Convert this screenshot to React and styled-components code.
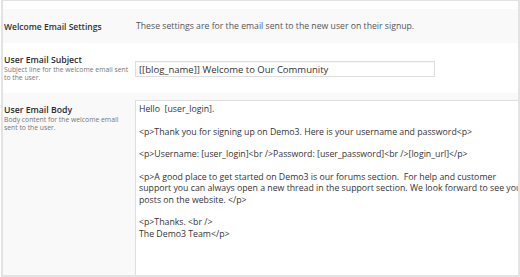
import * as React from "react";
import styled, { createGlobalStyle } from "styled-components";

const GlobalStyle = createGlobalStyle`
  html, body {
    margin: 0;
    padding: 0;
    background: #fff;
  }
  body {
    font-family: "Open Sans", "Noto Sans", "Liberation Sans", sans-serif;
    color: #333;
  }
`;

const Frame = styled.div`
  box-sizing: border-box;
  width: 519px;
  height: 277px;
  margin-left: 1px;
  padding-top: 8px;
  border-top: 1px solid #e3e3e3;
  border-left: 2px solid #e3e3e3;
  border-right: 2px solid #e3e3e3;
  border-bottom: 2px solid #e3e3e3;
  display: flex;
  flex-direction: column;
  overflow: hidden;
`;

const Row = styled.div`
  display: grid;
  grid-template-columns: 132px 1fr;
  background: ${({ $shaded }) => ($shaded ? "#f9f9f9" : "#fff")};
  height: ${({ $height }) => ($height ? `${$height}px` : "auto")};
  flex: ${({ $grow }) => ($grow ? 1 : "none")};
  min-height: 0;
`;

const LabelCell = styled.div`
  padding: ${({ $top }) => `${$top}px`} 2px 0 1px;
  display: flex;
  flex-direction: column;
  justify-content: ${({ $center }) => ($center ? "center" : "flex-start")};
`;

const SectionTitle = styled.div`
  font-size: 8.5px;
  font-weight: 600;
  color: #333;
  white-space: nowrap;
`;

const FieldLabel = styled.div`
  font-size: 8.7px;
  line-height: 12px;
  font-weight: 600;
  color: #2a2a2a;
`;

const FieldHint = styled.div`
  font-size: 6.8px;
  line-height: 8px;
  color: #777;
  white-space: pre-line;
`;

const ValueCell = styled.div`
  display: flex;
  flex-direction: column;
  justify-content: ${({ $center }) => ($center ? "center" : "flex-start")};
  padding-top: ${({ $top }) => `${$top || 0}px`};
  min-height: 0;
`;

const SectionText = styled.div`
  padding-left: 1px;
  font-size: 8.7px;
  color: #555;
  white-space: nowrap;
`;

const TextInput = styled.input`
  box-sizing: border-box;
  width: 300px;
  height: 16px;
  margin: 0;
  padding: 0 3px;
  border: 1px solid #dedede;
  box-shadow: inset 0 1px 1px rgba(0, 0, 0, 0.04);
  background: #fff;
  font-family: inherit;
  font-size: 9.5px;
  color: #333;
  outline: none;
`;

const BodyArea = styled.textarea`
  box-sizing: border-box;
  flex: 1;
  width: 100%;
  margin: 0;
  padding: 3px 3px 0;
  border: 1px solid #dedede;
  border-right: none;
  border-bottom: none;
  background: #fff;
  font-family: inherit;
  font-size: 8.75px;
  line-height: 11.35px;
  color: #333;
  white-space: pre;
  overflow: hidden;
  resize: none;
  outline: none;
`;

const bodyText = `Hello  [user_login].

<p>Thank you for signing up on Demo3. Here is your username and password<p>

<p>Username: [user_login]<br />Password: [user_password]<br />[login_url]</p>

<p>A good place to get started on Demo3 is our forums section.  For help and customer
support you can always open a new thread in the support section. We look forward to see your
posts on the website. </p>

<p>Thanks. <br />
The Demo3 Team</p>`;

export default function App() {
  return (
    <>
      <GlobalStyle />
      <Frame>
        <Row $shaded $height={34}>
          <LabelCell $top={0} $center>
            <SectionTitle>Welcome Email Settings</SectionTitle>
          </LabelCell>
          <ValueCell $center>
            <SectionText>
              These settings are for the email sent to the new user on their signup.
            </SectionText>
          </ValueCell>
        </Row>

        <Row $height={50}>
          <LabelCell $top={11}>
            <FieldLabel>User Email Subject</FieldLabel>
            <FieldHint>{"Subject line for the welcome email sent\nto the user."}</FieldHint>
          </LabelCell>
          <ValueCell $top={18}>
            <TextInput
              type="text"
              readOnly
              defaultValue="[[blog_name]] Welcome to Our Community"
            />
          </ValueCell>
        </Row>

        <Row $shaded $grow>
          <LabelCell $top={11}>
            <FieldLabel>User Email Body</FieldLabel>
            <FieldHint>{"Body content for the welcome email\nsent to the user."}</FieldHint>
          </LabelCell>
          <ValueCell $top={7}>
            <BodyArea readOnly wrap="off" defaultValue={bodyText} />
          </ValueCell>
        </Row>
      </Frame>
    </>
  );
}
